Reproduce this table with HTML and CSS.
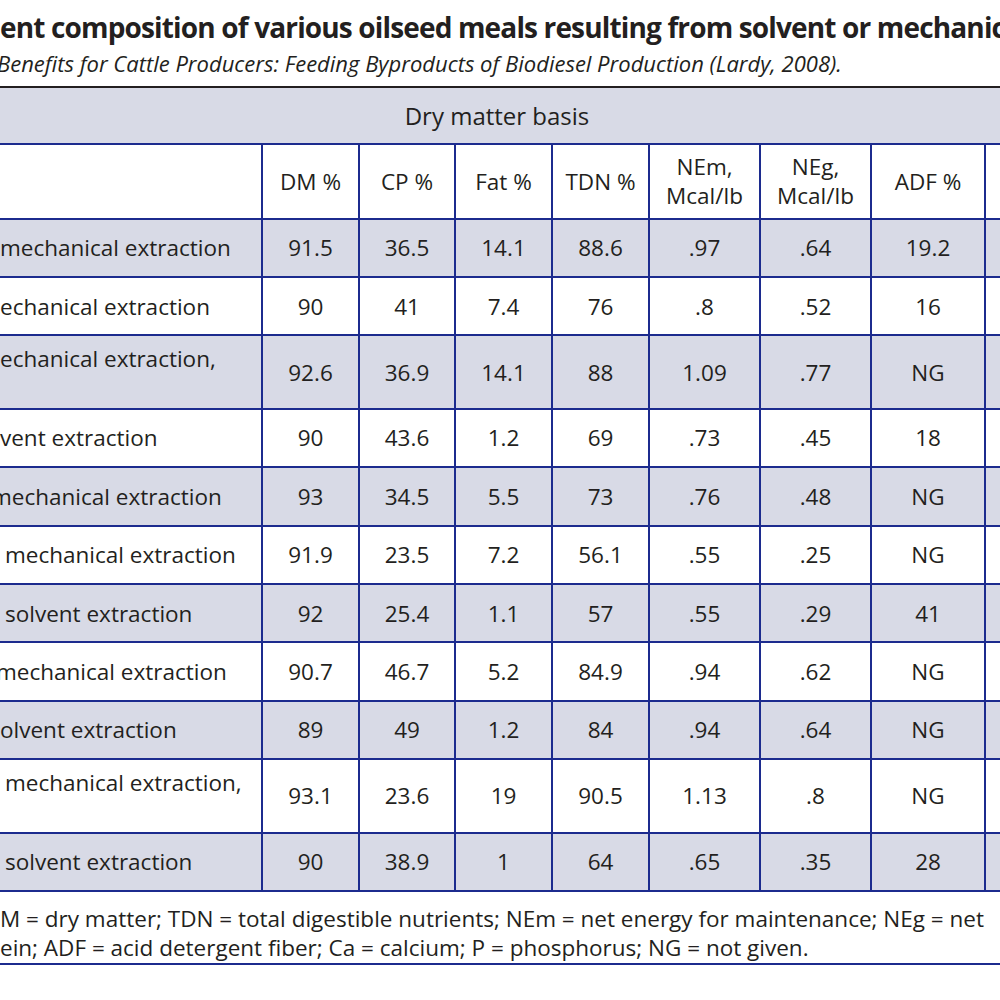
FILE: index.html
```html
<!DOCTYPE html>
<html lang="en">
<head>
<meta charset="utf-8">
<title>Oilseed meal composition</title>
<link rel="stylesheet" href="styles.css">
</head>
<body>
<div class="page">
  <h1 class="title">ent composition of various oilseed meals resulting from solvent or mechanical extraction</h1>
  <p class="source">Benefits for Cattle Producers: Feeding Byproducts of Biodiesel Production (Lardy, 2008).</p>
  <table class="nutr">
    <colgroup>
      <col class="c-name"><col class="c-n1"><col class="c-n2"><col class="c-n3"><col class="c-n4"><col class="c-e1"><col class="c-e2"><col class="c-adf"><col class="c-more">
    </colgroup>
    <thead>
      <tr class="band"><th colspan="9">Dry matter basis</th></tr>
      <tr class="heads">
        <th class="name"></th><th>DM %</th><th>CP %</th><th>Fat %</th><th>TDN %</th><th>NEm,<br>Mcal/lb</th><th>NEg,<br>Mcal/lb</th><th>ADF %</th><th></th>
      </tr>
    </thead>
    <tbody>
      <tr class="shade"><td class="name">mechanical extraction</td><td>91.5</td><td>36.5</td><td>14.1</td><td>88.6</td><td>.97</td><td>.64</td><td>19.2</td><td></td></tr>
      <tr><td class="name">echanical extraction</td><td>90</td><td>41</td><td>7.4</td><td>76</td><td>.8</td><td>.52</td><td>16</td><td></td></tr>
      <tr class="shade tall"><td class="name top">echanical extraction,</td><td>92.6</td><td>36.9</td><td>14.1</td><td>88</td><td>1.09</td><td>.77</td><td>NG</td><td></td></tr>
      <tr><td class="name">vent extraction</td><td>90</td><td>43.6</td><td>1.2</td><td>69</td><td>.73</td><td>.45</td><td>18</td><td></td></tr>
      <tr class="shade"><td class="name cut8">mechanical extraction</td><td>93</td><td>34.5</td><td>5.5</td><td>73</td><td>.76</td><td>.48</td><td>NG</td><td></td></tr>
      <tr><td class="name in5">mechanical extraction</td><td>91.9</td><td>23.5</td><td>7.2</td><td>56.1</td><td>.55</td><td>.25</td><td>NG</td><td></td></tr>
      <tr class="shade"><td class="name in5">solvent extraction</td><td>92</td><td>25.4</td><td>1.1</td><td>57</td><td>.55</td><td>.29</td><td>41</td><td></td></tr>
      <tr><td class="name cut4">mechanical extraction</td><td>90.7</td><td>46.7</td><td>5.2</td><td>84.9</td><td>.94</td><td>.62</td><td>NG</td><td></td></tr>
      <tr class="shade"><td class="name">olvent extraction</td><td>89</td><td>49</td><td>1.2</td><td>84</td><td>.94</td><td>.64</td><td>NG</td><td></td></tr>
      <tr class="tall"><td class="name top in5">mechanical extraction,</td><td>93.1</td><td>23.6</td><td>19</td><td>90.5</td><td>1.13</td><td>.8</td><td>NG</td><td></td></tr>
      <tr class="shade"><td class="name in5">solvent extraction</td><td>90</td><td>38.9</td><td>1</td><td>64</td><td>.65</td><td>.35</td><td>28</td><td></td></tr>
    </tbody>
    <tfoot>
      <tr><td colspan="9" class="note">M = dry matter; TDN = total digestible nutrients; NEm = net energy for maintenance; NEg = net<br>ein; ADF = acid detergent fiber; Ca = calcium; P = phosphorus; NG = not given.</td></tr>
    </tfoot>
  </table>
</div>
</body>
</html>
```
FILE: styles.css
```css
html, body {
  margin: 0;
  padding: 0;
  background: #ffffff;
}
.page {
  width: 1000px;
  height: 1000px;
  overflow: hidden;
  font-family: "Open Sans", "Noto Sans", sans-serif;
  color: #231f20;
}
.title {
  margin: 0;
  padding: 9px 0 0 0;
  font-size: 28px;
  font-weight: 700;
  line-height: 36px;
  white-space: nowrap;
  letter-spacing: -0.85px;
}
.source {
  margin: 0;
  padding: 4px 0 0 0;
  text-indent: -3px;
  font-size: 22px;
  font-style: italic;
  line-height: 28px;
  white-space: nowrap;
}
.nutr {
  margin-top: 9px;
  border-collapse: collapse;
  table-layout: fixed;
  width: 1085px;
  font-size: 22.5px;
}
.c-name { width: 262px; }
.c-n1 { width: 97px; }
.c-n2 { width: 96px; }
.c-n3 { width: 97px; }
.c-n4 { width: 97px; }
.c-e1 { width: 111px; }
.c-e2 { width: 111px; }
.c-adf { width: 114px; }
.c-more { width: 100px; }
.nutr th, .nutr td {
  padding: 0;
  font-weight: 400;
  text-align: center;
  vertical-align: middle;
  border: 2px solid #1c2b8e;
  white-space: nowrap;
  line-height: 29px;
}
.nutr th.name, .nutr td.name {
  border-left: none;
  text-align: left;
}
.band th {
  background: #d8dae6;
  border-top: 2px solid #231f20;
  border-left: none;
  border-right: none;
  height: 55px;
  padding-right: 91px;
  font-size: 24px;
}
.heads th {
  height: 72.5px;
  background: #ffffff;
}
tbody tr { height: 58.4px; }
tbody tr.tall { height: 73.5px; }
tbody tr.shade td { background: #d8dae6; }
td.top { vertical-align: top; padding-top: 8px; }
td.in5 { text-indent: 5px; }
td.cut8 { text-indent: -9px; }
td.cut4 { text-indent: -4px; }
.note {
  text-align: left !important;
  border-left: none !important;
  border-right: none !important;
  font-size: 22.5px;
  line-height: 29px !important;
  padding: 12px 0 1px 0 !important;
  vertical-align: top !important;
}
```
